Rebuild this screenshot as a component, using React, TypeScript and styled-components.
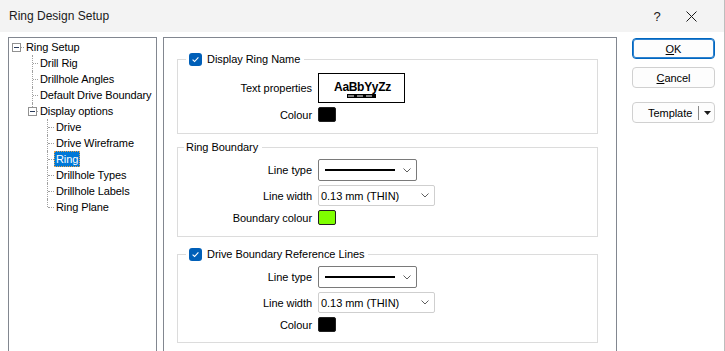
import React from "react";
import styled, { createGlobalStyle } from "styled-components";

const GlobalStyle = createGlobalStyle`
  html, body {
    margin: 0;
    padding: 0;
    background: #ffffff;
    overflow: hidden;
  }
  body {
    font-family: "Liberation Sans", Arial, sans-serif;
    font-size: 11px;
    letter-spacing: -0.05px;
    color: #000;
  }
`;

type TreeItem = {
  label: string;
  level: number;
  kind: "root" | "branch" | "folder";
  last?: boolean;
  selected?: boolean;
};

const treeItems: TreeItem[] = [
  { label: "Ring Setup", level: 0, kind: "root" },
  { label: "Drill Rig", level: 1, kind: "branch" },
  { label: "Drillhole Angles", level: 1, kind: "branch" },
  { label: "Default Drive Boundary", level: 1, kind: "branch" },
  { label: "Display options", level: 1, kind: "folder", last: true },
  { label: "Drive", level: 2, kind: "branch" },
  { label: "Drive Wireframe", level: 2, kind: "branch" },
  { label: "Ring", level: 2, kind: "branch", selected: true },
  { label: "Drillhole Types", level: 2, kind: "branch" },
  { label: "Drillhole Labels", level: 2, kind: "branch" },
  { label: "Ring Plane", level: 2, kind: "branch", last: true },
];

// left padding of a row inside the tree, by level and kind
const indentFor = (item: TreeItem) => {
  if (item.kind === "root") return 3;
  if (item.kind === "folder") return 19;
  return item.level === 1 ? 23 : 38;
};

const Chevron = () => (
  <svg width="8" height="5" viewBox="0 0 8 5">
    <polyline points="0.5,0.5 4,4 7.5,0.5" fill="none" stroke="#5f5f5f" strokeWidth="1" />
  </svg>
);

const CheckBox = () => (
  <CheckBoxBox>
    <svg width="9" height="9" viewBox="0 0 9 9">
      <polyline points="1.6,4.6 3.6,6.5 7.4,2.4" fill="none" stroke="#fff" strokeWidth="1.1" />
    </svg>
  </CheckBoxBox>
);

const App = () => {
  return (
    <Window>
      <GlobalStyle />
      <TitleBar>
        <Title>Ring Design Setup</Title>
        <TitleButton>?</TitleButton>
        <TitleButton>
          <svg width="11" height="11" viewBox="0 0 11 11">
            <path d="M0.5 0.5 L10.5 10.5 M10.5 0.5 L0.5 10.5" stroke="#1a1a1a" strokeWidth="1" />
          </svg>
        </TitleButton>
      </TitleBar>
      <Body>
        <TreePanel>
          {treeItems.map((item) => (
            <TreeRow key={item.label} $indent={indentFor(item)}>
              {item.kind === "branch" && <Branch $last={item.last} $width={item.level === 1 ? 6 : 7} />}
              {item.kind !== "branch" && <Expander $withStem={item.kind === "folder"} />}
              {item.kind !== "branch" && <Dots $width={item.kind === "root" ? 3 : 1} />}
              <TreeLabel $selected={item.selected}>{item.label}</TreeLabel>
            </TreeRow>
          ))}
        </TreePanel>

        <ContentPanel>
          <Group $top={14} $padTop={7} $padBottom={11}>
            <Legend $offset={8}>
              <CheckBox />
              Display Ring Name
            </Legend>
            <Fields>
              <Label>Text properties</Label>
              <FontPreview>
                <PreviewText>AaBbYyZz</PreviewText>
                <svg width="29" height="4" viewBox="0 0 29 4">
                  <rect x="0" y="0" width="29" height="4" fill="#000" />
                  <line x1="1" y1="2" x2="28" y2="2" stroke="#fff" strokeWidth="1" strokeDasharray="6 3" />
                </svg>
              </FontPreview>
              <Label>Colour</Label>
              <Swatch $color="#000000" />
            </Fields>
          </Group>

          <Group $top={6} $padTop={5} $padBottom={11}>
            <Legend $offset={6}>Ring Boundary</Legend>
            <Fields>
              <Label>Line type</Label>
              <Combo $width={99} $height={22} $dark>
                <LineSample />
                <Chevron />
              </Combo>
              <Label>Line width</Label>
              <Combo $width={117} $height={21}>
                <span>0.13 mm (THIN)</span>
                <Chevron />
              </Combo>
              <Label>Boundary colour</Label>
              <Swatch $color="#7fff00" />
            </Fields>
          </Group>

          <Group $top={10} $padTop={5} $padBottom={10}>
            <Legend $offset={8}>
              <CheckBox />
              Drive Boundary Reference Lines
            </Legend>
            <Fields>
              <Label>Line type</Label>
              <Combo $width={99} $height={22} $dark>
                <LineSample />
                <Chevron />
              </Combo>
              <Label>Line width</Label>
              <Combo $width={117} $height={21}>
                <span>0.13 mm (THIN)</span>
                <Chevron />
              </Combo>
              <Label>Colour</Label>
              <Swatch $color="#000000" />
            </Fields>
          </Group>
        </ContentPanel>

        <Buttons>
          <Button $primary>
            <u>O</u>K
          </Button>
          <Button>
            <u>C</u>ancel
          </Button>
          <SplitButton>
            <span>Template</span>
            <SplitDivider />
            <svg width="7" height="4" viewBox="0 0 7 4">
              <polygon points="0,0 7,0 3.5,4" fill="#1a1a1a" />
            </svg>
          </SplitButton>
        </Buttons>
      </Body>
    </Window>
  );
};

export default App;

const Window = styled.div`
  width: 725px;
  height: 351px;
  box-sizing: border-box;
  border-right: 1px solid #bdbdbd;
  display: flex;
  flex-direction: column;
  overflow: hidden;
  background: #ffffff;
`;

const TitleBar = styled.div`
  height: 32px;
  flex: none;
  background: #f3f3f3;
  display: flex;
  align-items: center;
  padding: 0 16px 0 9px;
  font-size: 12px;
  letter-spacing: 0;
  color: #1a1a1a;
`;

const Title = styled.span`
  flex: 1;
`;

const TitleButton = styled.div`
  width: 34px;
  height: 32px;
  display: flex;
  align-items: center;
  justify-content: center;
  font-size: 13px;
`;

const Body = styled.div`
  display: flex;
  align-items: flex-start;
  padding: 5px 0 0 8px;
`;

const TreePanel = styled.div`
  width: 149px;
  height: 330px;
  flex: none;
  box-sizing: border-box;
  border: 1px solid #828790;
  padding-top: 1px;
  letter-spacing: -0.1px;
`;

const TreeRow = styled.div<{ $indent: number }>`
  height: 16px;
  display: flex;
  align-items: center;
  padding-left: ${(p) => p.$indent}px;
`;

const Branch = styled.span<{ $last?: boolean; $width: number }>`
  position: relative;
  flex: none;
  width: ${(p) => p.$width}px;
  height: 16px;

  &::before {
    content: "";
    position: absolute;
    left: 0;
    top: 0;
    height: ${(p) => (p.$last ? "8px" : "16px")};
    border-left: 1px dotted #a0a0a0;
  }

  &::after {
    content: "";
    position: absolute;
    left: 1px;
    top: 8px;
    width: ${(p) => p.$width - 1}px;
    border-top: 1px dotted #a0a0a0;
  }
`;

const Expander = styled.span<{ $withStem?: boolean }>`
  position: relative;
  flex: none;
  width: 9px;
  height: 9px;
  box-sizing: border-box;
  border: 1px solid #919191;
  background: #fff;

  &::after {
    content: "";
    position: absolute;
    left: 1px;
    top: 3px;
    width: 5px;
    border-top: 1px solid #2a3a5a;
  }

  &::before {
    content: ${(p) => (p.$withStem ? '""' : "none")};
    position: absolute;
    left: 3px;
    top: -5px;
    height: 4px;
    border-left: 1px dotted #a0a0a0;
  }
`;

const Dots = styled.span<{ $width: number }>`
  flex: none;
  width: ${(p) => p.$width}px;
  margin-top: 1px;
  border-top: 1px dotted #a0a0a0;
`;

const TreeLabel = styled.span<{ $selected?: boolean }>`
  height: 16px;
  line-height: 16px;
  padding: 0 2px;
  white-space: nowrap;
  box-sizing: border-box;
  background: ${(p) => (p.$selected ? "#0078d7" : "transparent")};
  color: ${(p) => (p.$selected ? "#fff" : "#000")};
  outline: ${(p) => (p.$selected ? "1px dotted #e8a24a" : "none")};
  outline-offset: -1px;
`;

const ContentPanel = styled.div`
  width: 454px;
  height: 330px;
  flex: none;
  box-sizing: border-box;
  margin-left: 6px;
  border: 1px solid #828790;
  padding: 0 18px 0 13px;
  overflow: hidden;
`;

const Group = styled.fieldset<{ $top: number; $padTop: number; $padBottom: number }>`
  margin: ${(p) => p.$top}px 0 0;
  padding: ${(p) => p.$padTop}px 0 ${(p) => p.$padBottom}px;
  border: 1px solid #dcdcdc;
  min-width: 0;
`;

const Legend = styled.legend<{ $offset: number }>`
  margin-left: ${(p) => p.$offset}px;
  padding: 0 4px 0 2px;
  height: 14px;
  display: flex;
  align-items: center;
  gap: 5px;
  white-space: nowrap;
`;

const CheckBoxBox = styled.span`
  width: 13px;
  height: 13px;
  border-radius: 3px;
  background: #005fb8;
  display: flex;
  align-items: center;
  justify-content: center;
  margin-left: 1px;
`;

const Fields = styled.div`
  display: grid;
  grid-template-columns: 134px auto;
  column-gap: 6px;
  row-gap: 4px;
  align-items: center;
  justify-items: start;
`;

const Label = styled.div`
  justify-self: end;
  white-space: nowrap;
`;

const FontPreview = styled.div`
  width: 87px;
  height: 30px;
  box-sizing: border-box;
  border: 1px solid #000;
  display: flex;
  flex-direction: column;
  align-items: center;
  justify-content: center;
  padding-top: 2px;
`;

const PreviewText = styled.span`
  font-weight: bold;
  font-size: 12px;
  line-height: 14px;
  letter-spacing: -0.3px;
  padding-left: 2px;
`;

const Swatch = styled.span<{ $color: string }>`
  width: 18px;
  height: 15px;
  box-sizing: border-box;
  border: 1px solid #202020;
  border-radius: 2px;
  background: ${(p) => p.$color};
`;

const Combo = styled.div<{ $width: number; $height: number; $dark?: boolean }>`
  width: ${(p) => p.$width}px;
  height: ${(p) => p.$height}px;
  box-sizing: border-box;
  border: 1px solid ${(p) => (p.$dark ? "#7a7a7a" : "#cfcfcf")};
  border-radius: 2px;
  background: #fff;
  display: flex;
  align-items: center;
  justify-content: space-between;
  padding: 0 5px 0 ${(p) => (p.$dark ? 6 : 2)}px;
  white-space: nowrap;
`;

const LineSample = styled.span`
  width: 70px;
  height: 2px;
  background: #000;
`;

const Buttons = styled.div`
  display: flex;
  flex-direction: column;
  width: 83px;
  margin: 1px 0 0 15px;
`;

const Button = styled.button<{ $primary?: boolean }>`
  width: 83px;
  height: 21px;
  margin-bottom: 8px;
  padding: 0;
  border-radius: 4px;
  font-family: inherit;
  font-size: 11px;
  letter-spacing: -0.05px;
  color: #000;
  background: #fdfdfd;
  border: 1px solid ${(p) => (p.$primary ? "#0067c0" : "#d0d0d0")};
  box-shadow: ${(p) => (p.$primary ? "inset 0 0 0 1px #2f82cf" : "none")};
`;

const SplitButton = styled.div`
  width: 83px;
  height: 21px;
  margin-top: 6px;
  box-sizing: border-box;
  border: 1px solid #d0d0d0;
  border-radius: 4px;
  background: #fdfdfd;
  display: flex;
  align-items: center;
  padding-left: 15px;
`;

const SplitDivider = styled.span`
  width: 1px;
  height: 14px;
  background: #8a8a8a;
  margin: 0 5px 0 6px;
`;
